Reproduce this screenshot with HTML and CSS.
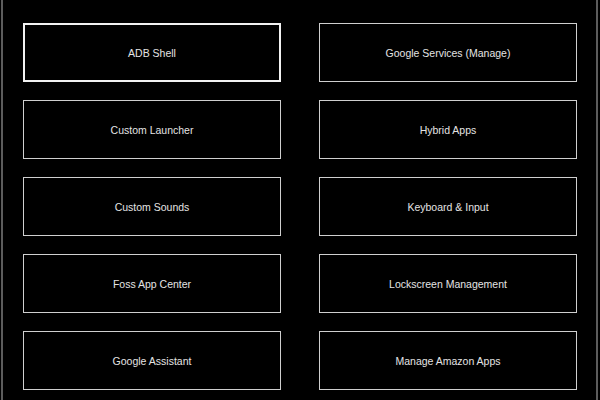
FILE: index.html
```html
<!DOCTYPE html>
<html>
<head>
<meta charset="utf-8">
<link rel="stylesheet" href="styles.css">
</head>
<body>
<div class="frame">
  <div class="grid">
    <button class="btn focused">ADB Shell</button>
    <button class="btn">Google Services (Manage)</button>
    <button class="btn">Custom Launcher</button>
    <button class="btn">Hybrid Apps</button>
    <button class="btn">Custom Sounds</button>
    <button class="btn">Keyboard &amp; Input</button>
    <button class="btn">Foss App Center</button>
    <button class="btn">Lockscreen Management</button>
    <button class="btn">Google Assistant</button>
    <button class="btn">Manage Amazon Apps</button>
  </div>
</div>
</body>
</html>
```
FILE: styles.css
```css
html, body {
  margin: 0;
  padding: 0;
  background: #000;
  overflow: hidden;
}
.frame {
  box-sizing: border-box;
  margin-left: 1px;
  width: 597px;
  height: 400px;
  border-left: 2px solid #5c5c5c;
  border-right: 2px solid #5c5c5c;
  padding: 23px 0 0 20px;
}
.grid {
  display: grid;
  grid-template-columns: 258px 258px;
  grid-auto-rows: 59px;
  column-gap: 38px;
  row-gap: 18px;
}
.btn {
  box-sizing: border-box;
  background: #000;
  border: 1px solid #cfcfcf;
  color: #e4e4e4;
  font-family: "Liberation Sans", Arial, sans-serif;
  font-size: 10.5px;
  padding: 1px 0 0 0;
  margin: 0;
  display: flex;
  align-items: center;
  justify-content: center;
}
.btn.focused {
  border: 2px solid #f2f2f2;
}
```
